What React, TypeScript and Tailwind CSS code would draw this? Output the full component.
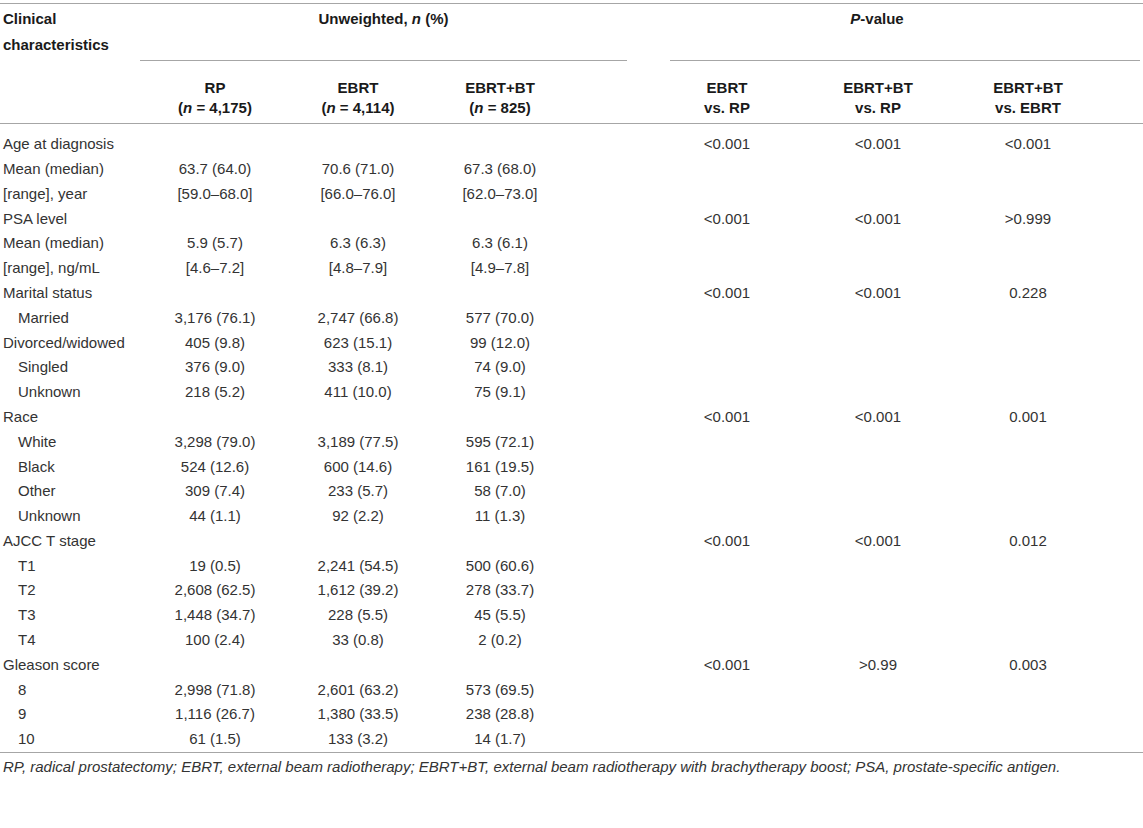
import React from 'react';

type Row = {
  label: string;
  indent?: boolean;
  vals?: [string, string, string];
  p?: [string, string, string];
};

const rows: Row[] = [
  { label: 'Age at diagnosis', p: ['<0.001', '<0.001', '<0.001'] },
  { label: 'Mean (median)', vals: ['63.7 (64.0)', '70.6 (71.0)', '67.3 (68.0)'] },
  { label: '[range], year', vals: ['[59.0–68.0]', '[66.0–76.0]', '[62.0–73.0]'] },
  { label: 'PSA level', p: ['<0.001', '<0.001', '>0.999'] },
  { label: 'Mean (median)', vals: ['5.9 (5.7)', '6.3 (6.3)', '6.3 (6.1)'] },
  { label: '[range], ng/mL', vals: ['[4.6–7.2]', '[4.8–7.9]', '[4.9–7.8]'] },
  { label: 'Marital status', p: ['<0.001', '<0.001', '0.228'] },
  { label: 'Married', indent: true, vals: ['3,176 (76.1)', '2,747 (66.8)', '577 (70.0)'] },
  { label: 'Divorced/widowed', vals: ['405 (9.8)', '623 (15.1)', '99 (12.0)'] },
  { label: 'Singled', indent: true, vals: ['376 (9.0)', '333 (8.1)', '74 (9.0)'] },
  { label: 'Unknown', indent: true, vals: ['218 (5.2)', '411 (10.0)', '75 (9.1)'] },
  { label: 'Race', p: ['<0.001', '<0.001', '0.001'] },
  { label: 'White', indent: true, vals: ['3,298 (79.0)', '3,189 (77.5)', '595 (72.1)'] },
  { label: 'Black', indent: true, vals: ['524 (12.6)', '600 (14.6)', '161 (19.5)'] },
  { label: 'Other', indent: true, vals: ['309 (7.4)', '233 (5.7)', '58 (7.0)'] },
  { label: 'Unknown', indent: true, vals: ['44 (1.1)', '92 (2.2)', '11 (1.3)'] },
  { label: 'AJCC T stage', p: ['<0.001', '<0.001', '0.012'] },
  { label: 'T1', indent: true, vals: ['19 (0.5)', '2,241 (54.5)', '500 (60.6)'] },
  { label: 'T2', indent: true, vals: ['2,608 (62.5)', '1,612 (39.2)', '278 (33.7)'] },
  { label: 'T3', indent: true, vals: ['1,448 (34.7)', '228 (5.5)', '45 (5.5)'] },
  { label: 'T4', indent: true, vals: ['100 (2.4)', '33 (0.8)', '2 (0.2)'] },
  { label: 'Gleason score', p: ['<0.001', '>0.99', '0.003'] },
  { label: '8', indent: true, vals: ['2,998 (71.8)', '2,601 (63.2)', '573 (69.5)'] },
  { label: '9', indent: true, vals: ['1,116 (26.7)', '1,380 (33.5)', '238 (28.8)'] },
  { label: '10', indent: true, vals: ['61 (1.5)', '133 (3.2)', '14 (1.7)'] },
];

const cols = 'grid grid-cols-[140px_150px_136px_148px_76px_154px_148px_152px_39px]';

const App: React.FC = () => {
  return (
    <div className="w-[1143px] h-[828px] bg-white text-[#333] text-[15px] font-['Liberation_Sans',Arial,sans-serif] pt-[3px]">
      <div className="h-px bg-[#a6a6a6]" />

      {/* Header */}
      <div className={`${cols} font-bold text-[#1a1a1a]`}>
        <div className="row-span-3 pl-[3px] pt-[2px] leading-[26px]">
          Clinical
          <br />
          characteristics
        </div>
        <div className="col-span-4 pt-[4px] pr-[23px] text-center leading-[22px]">
          Unweighted, <i>n</i> (%)
        </div>
        <div className="col-span-3 pt-[4px] text-center leading-[22px]">
          <i>P</i>-value
        </div>
        <div />
        <div className="col-span-4 mt-[30px] mr-[23px] h-px bg-[#a6a6a6]" />
        <div className="col-span-4 mt-[30px] ml-[20px] mr-[3px] h-px bg-[#a6a6a6]" />
        <div className="text-center pt-[17px] pb-[5px] leading-[20px]">
          RP
          <br />(<i>n</i> = 4,175)
        </div>
        <div className="text-center pt-[17px] pb-[5px] leading-[20px]">
          EBRT
          <br />(<i>n</i> = 4,114)
        </div>
        <div className="text-center pt-[17px] pb-[5px] leading-[20px]">
          EBRT+BT
          <br />(<i>n</i> = 825)
        </div>
        <div />
        <div className="text-center pt-[17px] pb-[5px] leading-[20px]">
          EBRT
          <br />
          vs. RP
        </div>
        <div className="text-center pt-[17px] pb-[5px] leading-[20px]">
          EBRT+BT
          <br />
          vs. RP
        </div>
        <div className="text-center pt-[17px] pb-[5px] leading-[20px]">
          EBRT+BT
          <br />
          vs. EBRT
        </div>
        <div />
      </div>
      <div className="h-px bg-[#a6a6a6]" />

      {/* Body */}
      <div className="pt-[8px]">
        {rows.map((r, i) => (
          <div key={i} className={`${cols} h-[24.8px] items-center`}>
            <div className={r.indent ? 'pl-[18px]' : 'pl-[3px]'}>{r.label}</div>
            <div className="text-center">{r.vals?.[0]}</div>
            <div className="text-center">{r.vals?.[1]}</div>
            <div className="text-center">{r.vals?.[2]}</div>
            <div />
            <div className="text-center">{r.p?.[0]}</div>
            <div className="text-center">{r.p?.[1]}</div>
            <div className="text-center">{r.p?.[2]}</div>
            <div />
          </div>
        ))}
      </div>
      <div className="h-px bg-[#a6a6a6]" />

      <p className="pl-[3px] pt-[5px] leading-[18px] italic text-[#333]">
        RP, radical prostatectomy; EBRT, external beam radiotherapy; EBRT+BT, external beam radiotherapy with brachytherapy boost; PSA, prostate-specific antigen.
      </p>
    </div>
  );
};

export default App;
